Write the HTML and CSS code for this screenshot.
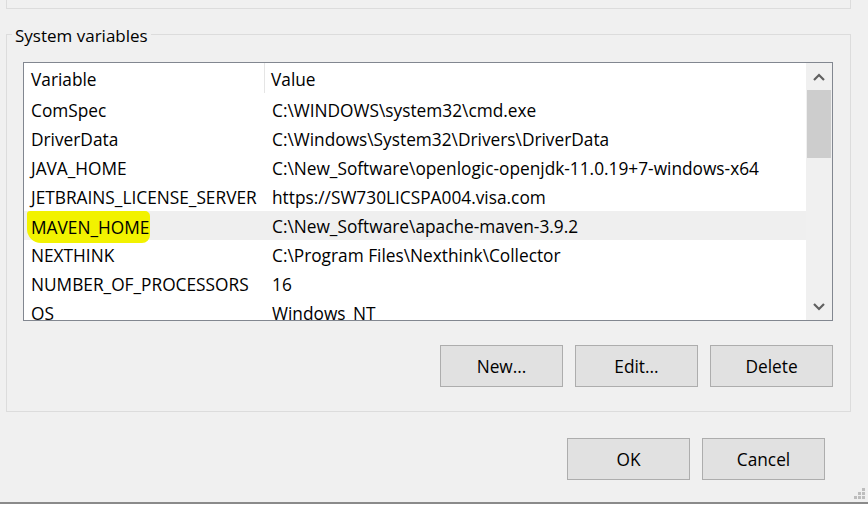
FILE: index.html
```html
<!DOCTYPE html>
<html>
<head>
<meta charset="utf-8">
<link rel="stylesheet" href="styles.css">
</head>
<body>
<div class="window">
  <div class="prev-group"></div>
  <fieldset class="group">
    <legend>System variables</legend>
    <div class="listview">
      <div class="list-main">
        <div class="row header"><div class="c1">Variable</div><div class="c2">Value</div></div>
        <div class="row"><div class="c1">ComSpec</div><div class="c2">C:\WINDOWS\system32\cmd.exe</div></div>
        <div class="row"><div class="c1">DriverData</div><div class="c2">C:\Windows\System32\Drivers\DriverData</div></div>
        <div class="row"><div class="c1">JAVA_HOME</div><div class="c2">C:\New_Software\openlogic-openjdk-11.0.19+7-windows-x64</div></div>
        <div class="row"><div class="c1">JETBRAINS_LICENSE_SERVER</div><div class="c2">https://SW730LICSPA004.visa.com</div></div>
        <div class="row hot"><div class="c1"><span class="marker">MAVEN_HOME</span></div><div class="c2">C:\New_Software\apache-maven-3.9.2</div></div>
        <div class="row"><div class="c1">NEXTHINK</div><div class="c2">C:\Program Files\Nexthink\Collector</div></div>
        <div class="row"><div class="c1">NUMBER_OF_PROCESSORS</div><div class="c2">16</div></div>
        <div class="row"><div class="c1">OS</div><div class="c2">Windows_NT</div></div>
      </div>
      <div class="scrollbar">
        <div class="sb-btn"><svg width="12" height="8" viewBox="0 0 12 8"><path d="M1 7 L6 2 L11 7" fill="none" stroke="#606060" stroke-width="2.2"/></svg></div>
        <div class="sb-track"><div class="sb-thumb"></div></div>
        <div class="sb-btn"><svg width="12" height="8" viewBox="0 0 12 8"><path d="M1 1 L6 6 L11 1" fill="none" stroke="#606060" stroke-width="2.2"/></svg></div>
      </div>
    </div>
    <div class="btn-row">
      <button class="btn">New...</button>
      <button class="btn">Edit...</button>
      <button class="btn">Delete</button>
    </div>
  </fieldset>
  <div class="footer">
    <button class="btn">OK</button>
    <button class="btn">Cancel</button>
  </div>
  <div class="grip-row">
    <svg class="grip" width="12" height="12" viewBox="0 0 12 12">
      <rect x="8" y="0" width="3" height="3" fill="#bdbdbd"/>
      <rect x="4" y="4" width="3" height="3" fill="#bdbdbd"/>
      <rect x="8" y="4" width="3" height="3" fill="#bdbdbd"/>
      <rect x="0" y="8" width="3" height="3" fill="#bdbdbd"/>
      <rect x="4" y="8" width="3" height="3" fill="#bdbdbd"/>
      <rect x="8" y="8" width="3" height="3" fill="#bdbdbd"/>
    </svg>
  </div>
</div>
</body>
</html>
```

FILE: styles.css
```css
html, body {
  margin: 0;
  padding: 0;
  background: #ffffff;
}
body {
  font-family: "Open Sans", "Noto Sans", sans-serif;
  font-size: 17.3px;
  color: #000;
}
.window {
  height: 502px;
  background: #f0f0f0;
  border-bottom: 2px solid #8a8a8a;
  display: flex;
  flex-direction: column;
}
.prev-group {
  height: 8px;
  margin: 0 17px 0 6px;
  border: 1px solid #dcdcdc;
  border-top: none;
  flex: none;
}
.group {
  margin: 14px 17px 0 6px;
  padding: 16px 17px 24px 16px;
  border: 1px solid #dcdcdc;
  min-width: 0;
  flex: none;
}
.group legend {
  padding: 2px 3px 0;
  margin-left: -11px;
  line-height: 21px;
  height: 23px;
  box-sizing: border-box;
  font-size: 17px;
}
.listview {
  display: flex;
  height: 259px;
  box-sizing: border-box;
  border: 1px solid #828790;
  background: #fff;
}
.list-main {
  flex: 1;
  overflow: hidden;
  min-width: 0;
}
.row {
  display: flex;
  height: 29px;
  line-height: 31px;
  white-space: nowrap;
}
.row.header {
  height: 32px;
  line-height: 33px;
}
.row.hot {
  background: #efefef;
}
.c1 {
  width: 241px;
  padding-left: 7px;
  box-sizing: border-box;
  flex: none;
}
.header .c1 {
  border-right: 1px solid #e5e5e5;
  height: 30px;
}
.c2 {
  padding-left: 7px;
}
.header .c2 {
  padding-left: 6px;
}
.marker {
  display: inline-block;
  background: #f2f200;
  line-height: 25px;
  padding: 4px 1px 3px 4px;
  margin-left: -4px;
  border-radius: 3px 5px 8px 14px;
}
.scrollbar {
  width: 26px;
  flex: none;
  background: #f0f0f0;
  display: flex;
  flex-direction: column;
}
.sb-btn {
  height: 27px;
  display: flex;
  align-items: center;
  justify-content: center;
  flex: none;
}
.sb-track {
  flex: 1;
}
.sb-thumb {
  height: 68px;
  background: #cdcdcd;
  margin: 0 1px;
}
.btn-row {
  display: flex;
  justify-content: flex-end;
  gap: 12px;
  margin-top: 24px;
}
.btn {
  width: 123px;
  height: 42px;
  background: #e1e1e1;
  border: 1px solid #adadad;
  font: inherit;
  color: #000;
  padding: 0;
}
.footer {
  display: flex;
  justify-content: flex-end;
  gap: 12px;
  margin-top: 26px;
  padding-right: 43px;
}
.grip-row {
  margin-top: auto;
  display: flex;
  justify-content: flex-end;
  padding: 0 2px 2px 0;
}
```
